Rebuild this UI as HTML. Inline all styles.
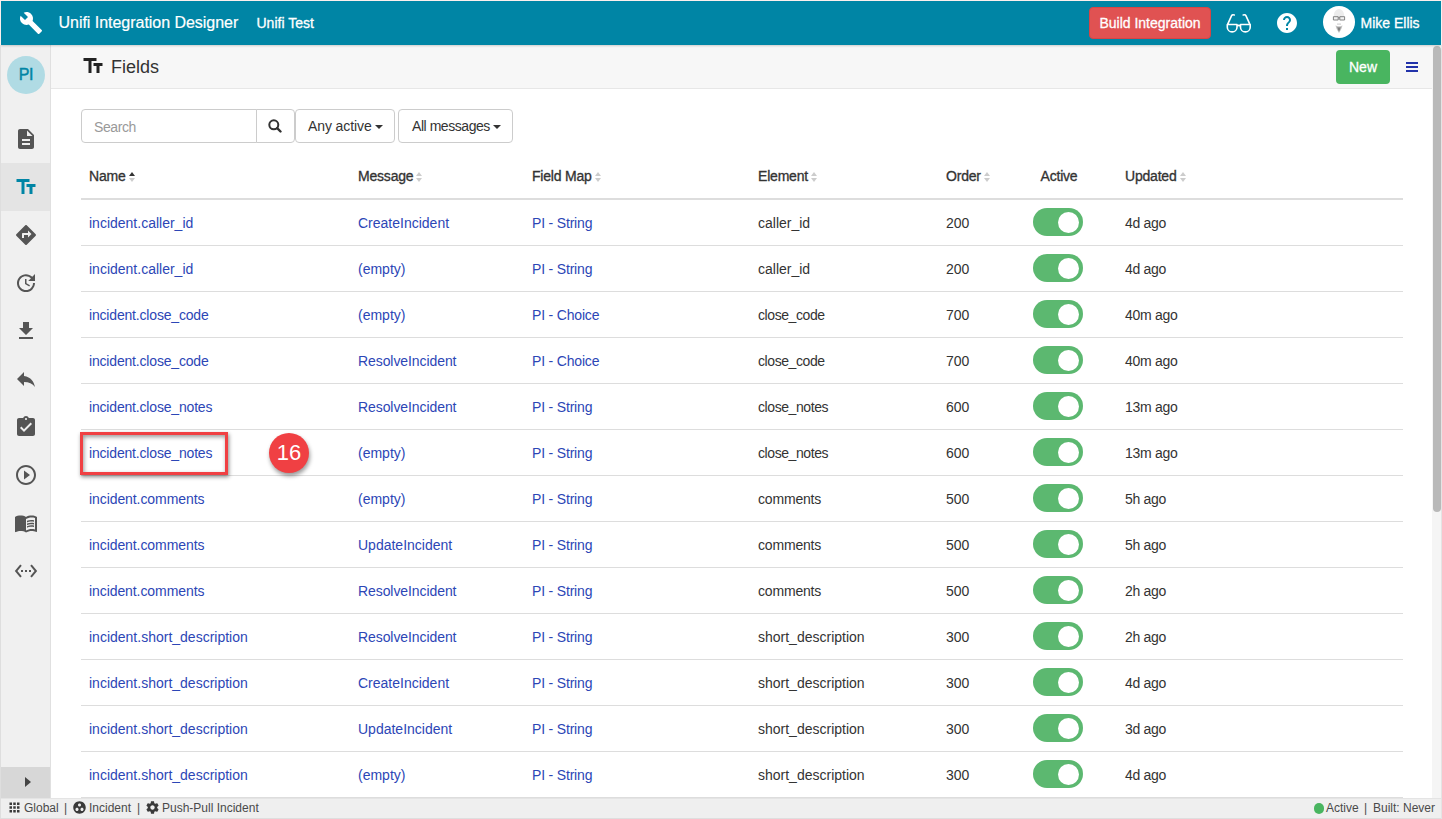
<!DOCTYPE html>
<html lang="en"><head><meta charset="utf-8"><title>Unifi Integration Designer</title>
<style>
*{box-sizing:border-box;margin:0;padding:0}
html,body{width:1442px;height:819px;overflow:hidden;background:#fcefed;font-family:"Liberation Sans",sans-serif;font-size:14px;color:#333}
#app{position:absolute;left:1px;top:1px;width:1440px;height:817px;background:#fff;overflow:hidden}
.abs{position:absolute}
.t{position:absolute;white-space:nowrap;line-height:20px}
.btn{position:absolute;text-align:center;font-size:14px;white-space:nowrap}
#top{position:absolute;left:0;top:0;width:1440px;height:44px;background:#0085a5;color:#fff;z-index:5;box-shadow:0 1px 2px rgba(0,0,0,.18)}
#side{position:absolute;left:0;top:44px;width:50px;height:753px;background:#f0f0f0;border-right:1px solid #e0e0e0}
#side .pi{position:absolute;left:6px;top:11px;width:38px;height:38px;border-radius:50%;background:#b0dbe4;color:#0085a5;font-size:16px;letter-spacing:-.3px;line-height:38px;text-align:center;-webkit-text-stroke:.45px #0085a5}
#side .sel{position:absolute;left:0;top:118px;width:49px;height:48px;background:#e4e4e4}
#side .exp{position:absolute;left:0;top:722px;width:49px;height:31px;background:#d7d7d7}
#side .exp i{position:absolute;left:24px;top:10px;border-left:6px solid #444;border-top:5px solid transparent;border-bottom:5px solid transparent}
#hdr{position:absolute;left:50px;top:44px;width:1381px;height:44px;background:#f7f7f7;border-bottom:1px solid #e7e7e7}
#main{position:absolute;left:0;top:0;width:1432px;height:797px}
.search{position:absolute;left:80px;top:108px;width:176px;height:34px;border:1px solid #ccc;border-radius:4px 0 0 4px;background:#fff}
.search span{position:absolute;left:12px;top:7px;line-height:20px;color:#999;letter-spacing:-.4px}
.sbtn{position:absolute;left:255px;top:108px;width:39px;height:34px;border:1px solid #ccc;border-radius:0 4px 4px 0;background:#fff}
.sbtn svg{position:absolute;left:11px;top:9px}
.dd{position:absolute;top:108px;height:34px;border:1px solid #ccc;border-radius:4px;background:#fff;line-height:32px;padding-left:12px;white-space:nowrap}
.dd i{display:inline-block;margin-left:3px;vertical-align:2px;border-top:4px solid #333;border-left:4px solid transparent;border-right:4px solid transparent}
table{position:absolute;left:80px;top:153px;width:1322px;border-collapse:collapse;table-layout:fixed}
th{height:45px;text-align:left;font-weight:normal;-webkit-text-stroke:.32px #333;letter-spacing:-.2px;padding:0 8px;border-bottom:2px solid #ddd;white-space:nowrap;color:#333}
td{height:46px;padding:2px 8px 0;border-bottom:1px solid #ddd;white-space:nowrap;vertical-align:middle}
th.c,td.c{text-align:center}
a{color:#2c46b6}
.k1{letter-spacing:-.08px}.k2{letter-spacing:-.18px}.k3{letter-spacing:-.3px}.k4{letter-spacing:-.42px}
.so{display:inline-block;position:relative;width:8px;height:12px;margin-left:3px;vertical-align:-2px}
.so:before,.so:after{content:"";position:absolute;left:0;border-left:3.500px solid transparent;border-right:3.500px solid transparent}
.so:before{top:1px;border-bottom:4px solid #ccc}
.so:after{top:7px;border-top:4px solid #ccc}
.so.on:before{border-bottom-color:#333}
.tg{display:inline-block;position:relative;top:-1px;left:-1px;width:50px;height:28px;border-radius:14px;background:#5cb870;vertical-align:middle}
.tg i{position:absolute;right:4px;top:3.500px;width:21px;height:21px;border-radius:50%;background:#fff}
.hl{position:absolute;left:79px;top:431px;width:148px;height:43px;border:3px solid #f04043;box-shadow:1px 2px 4px rgba(0,0,0,.45),inset 1px 2px 4px rgba(0,0,0,.4)}
.badge{position:absolute;left:268px;top:432px;width:40px;height:40px;border-radius:50%;background:#f04043;color:#fff;font-size:22px;line-height:40px;text-align:center;box-shadow:1px 3px 4px rgba(0,0,0,.4)}
#sb{position:absolute;left:1431px;top:44px;width:9px;height:753px;background:#f5f5f5}
#sb i{position:absolute;left:1px;top:1px;width:8px;height:466px;background:#b9b9b9;border-radius:4px}
#foot{position:absolute;left:0;top:797px;width:1440px;height:20px;background:#efefef;border-top:1px solid #e4e4e4;font-size:12px;color:#4a4a4a}
#foot .t{line-height:19px;font-size:12px}
#foot .dot{position:absolute;left:1312.500px;top:4px;width:10.500px;height:10.500px;border-radius:50%;background:#49b560}
.edge{position:absolute;background:#dedede}
.bold{-webkit-text-stroke:.3px currentColor}
</style></head><body>
<div class="edge" style="left:0;top:45px;width:1px;height:774px"></div><div class="edge" style="left:0;top:818px;width:1442px;height:1px"></div><div class="edge" style="left:1441px;top:45px;width:1px;height:774px;background:#e4e4e4"></div>
<div id="app">
<div id="top">
<svg class="abs" style="left:18px;top:10px" width="24" height="24" viewBox="0 0 24 24" fill="#fff"><path d="M22.7 19l-9.1-9.1c.9-2.3.4-5-1.5-6.9-2-2-5-2.4-7.4-1.3L9 6 6 9 1.6 4.7C.4 7.1.9 10.1 2.9 12.1c1.9 1.9 4.6 2.4 6.9 1.5l9.1 9.1c.4.4 1 .4 1.4 0l2.3-2.3c.5-.4.5-1.1.1-1.4z"/></svg>
<span class="t" style="left:57.500px;top:10px;font-size:16px;line-height:24px;letter-spacing:-.03px;-webkit-text-stroke:.2px #fff">Unifi Integration Designer</span>
<span class="t bold" style="left:255.500px;top:11px;font-size:14px;line-height:22px">Unifi Test</span>
<span class="btn bold" style="left:1088px;top:6px;width:122px;height:32px;line-height:31px;background:#e05252;border:1px solid #d64545;border-radius:4px;color:#fff">Build Integration</span>
<svg class="abs" style="left:1224px;top:12px" width="28" height="22" viewBox="0 0 28 22" fill="none" stroke="#fff" stroke-width="1.600" stroke-linecap="round" stroke-linejoin="round"><path d="M2.300 11.500h9.700v2.700a4.850 4.700 0 0 1-9.700 0zM15.500 11.500h9.700v2.700a4.850 4.700 0 0 1-9.700 0zM12 13c.9-.6 2.600-.6 3.500 0M2.600 11.300L6.600 2.700c.4-.9 1.500-1.200 2.700-.7M24.900 11.300L20.900 2.700c-.4-.9-1.500-1.200-2.700-.7"/></svg>
<svg class="abs" style="left:1274px;top:10px" width="24" height="24" viewBox="0 0 24 24" fill="#fff"><path d="M12 2C6.480 2 2 6.480 2 12s4.480 10 10 10 10-4.480 10-10S17.520 2 12 2zm1 17h-2v-2h2v2zm2.070-7.750l-.900.920C13.450 12.900 13 13.500 13 15h-2v-.500c0-1.100.450-2.100 1.170-2.830l1.240-1.260c.370-.360.590-.860.590-1.410 0-1.100-.900-2-2-2s-2 .900-2 2H8c0-2.210 1.790-4 4-4s4 1.790 4 4c0 .880-.360 1.680-.930 2.250z"/></svg>
<svg class="abs" style="left:1322px;top:5px" width="32" height="32" viewBox="0 0 32 32"><circle cx="16" cy="16" r="16" fill="#fff"/><path d="M10.800 12.500c-.6-6 2-9.500 5.200-9.500s5.800 3.500 5.200 9.500z" fill="#ececec"/><path d="M10.400 10.700h4.800v3.300h-4.800zM16.800 10.700h4.800v3.300h-4.800z" fill="#f2f2f2" stroke="#777" stroke-width=".9"/><path d="M15.200 11.800h1.600" stroke="#777" stroke-width=".8"/><path d="M14 18.100h4" stroke="#b0b0b0" stroke-width=".7"/><path d="M12.500 19.300c1.500 1.300 5.500 1.300 7 0-.6 3.500-2.400 6.200-3.500 7.700-1.100-1.500-2.900-4.200-3.500-7.700z" fill="#c4c4c4"/><path d="M14.300 21c.9.500 2.500.500 3.400 0-.3 2-1.100 3.500-1.700 4.600-.6-1.100-1.400-2.600-1.700-4.600z" fill="#808080"/></svg>
<span class="t bold" style="left:1359.500px;top:11px;font-size:14px;line-height:22px">Mike Ellis</span>
</div>
<div id="side">
<span class="pi">PI</span>
<div class="sel"></div>
<svg class="abs" style="left:13px;top:82px" width="24" height="24" viewBox="0 0 24 24" fill="#555"><path d="M14 2H6c-1.1 0-1.99.9-1.99 2L4 20c0 1.1.89 2 1.99 2H18c1.1 0 2-.9 2-2V8l-6-6zm2 16H8v-2h8v2zm0-4H8v-2h8v2zm-3-5V3.5L18.5 9H13z"/></svg>
<svg class="abs" style="left:13px;top:130px" width="24" height="24" viewBox="0 0 24 24" fill="#0085a5"><path d="M2.5 4v3h5v12h3V7h5V4h-13zm19 5h-9v3h3v7h3v-7h3V9z"/></svg>
<svg class="abs" style="left:13px;top:178px" width="24" height="24" viewBox="0 0 24 24" fill="#555"><path d="M21.71 11.29l-9-9c-.39-.39-1.02-.39-1.41 0l-9 9c-.39.39-.39 1.02 0 1.41l9 9c.39.39 1.02.39 1.41 0l9-9c.39-.38.39-1.01 0-1.41zM14 14.5V12h-4v3H8v-4c0-.55.45-1 1-1h5V7.500l3.500 3.500-3.500 3.500z"/></svg>
<svg class="abs" style="left:13px;top:226px" width="24" height="24" viewBox="0 0 24 24" fill="#555"><path d="M21 10.120h-6.780l2.740-2.820c-2.730-2.700-7.150-2.800-9.880-.100-2.730 2.710-2.730 7.080 0 9.790 2.730 2.710 7.150 2.710 9.880 0C18.320 15.650 19 14.080 19 12.100h2c0 1.980-.880 4.550-2.640 6.290-3.510 3.480-9.210 3.480-12.720 0-3.500-3.470-3.530-9.110-.020-12.580 3.510-3.470 9.140-3.470 12.650 0L21 3v7.120zM12.500 8v4.250l3.500 2.080-.720 1.210L11 13V8h1.500z"/></svg>
<svg class="abs" style="left:13px;top:274px" width="24" height="24" viewBox="0 0 24 24" fill="#555"><path d="M19 9h-4V3H9v6H5l7 7 7-7zM5 18v2h14v-2H5z"/></svg>
<svg class="abs" style="left:13px;top:322px" width="24" height="24" viewBox="0 0 24 24" fill="#555"><path d="M10 9V5l-7 7 7 7v-4.100c5 0 8.500 1.600 11 5.100-1-5-4-10-11-11z"/></svg>
<svg class="abs" style="left:13px;top:370px" width="24" height="24" viewBox="0 0 24 24" fill="#555"><path d="M19 3h-4.180C14.400 1.840 13.300 1 12 1c-1.300 0-2.400.840-2.820 2H5c-1.100 0-2 .900-2 2v14c0 1.100.900 2 2 2h14c1.100 0 2-.900 2-2V5c0-1.100-.900-2-2-2zm-7 0c.550 0 1 .450 1 1s-.450 1-1 1-1-.450-1-1 .450-1 1-1zm-2 14l-4-4 1.410-1.410L10 14.170l6.590-6.590L18 9l-8 8z"/></svg>
<svg class="abs" style="left:13px;top:418px" width="24" height="24" viewBox="0 0 24 24" fill="#555"><path d="M10 16.500l6-4.500-6-4.500v9zM12 2C6.480 2 2 6.480 2 12s4.480 10 10 10 10-4.480 10-10S17.520 2 12 2zm0 18c-4.410 0-8-3.590-8-8s3.590-8 8-8 8 3.590 8 8-3.590 8-8 8z"/></svg>
<svg class="abs" style="left:13px;top:466px" width="24" height="24" viewBox="0 0 24 24" fill="#555"><path d="M21 5c-1.110-.350-2.330-.500-3.500-.500-1.950 0-4.050.400-5.500 1.500-1.450-1.100-3.550-1.500-5.500-1.500S2.450 4.900 1 6v14.650c0 .250.250.500.500.500.100 0 .150-.050.250-.050C3.100 20.450 5.050 20 6.500 20c1.950 0 4.050.400 5.500 1.500 1.350-.850 3.800-1.500 5.500-1.500 1.650 0 3.350.300 4.750 1.050.100.050.150.050.250.050.250 0 .500-.250.500-.500V6c-.600-.450-1.250-.750-2-1zm0 13.500c-1.100-.350-2.300-.500-3.500-.500-1.700 0-4.150.650-5.500 1.500V8c1.350-.850 3.800-1.500 5.500-1.500 1.200 0 2.400.150 3.500.500v11.500zM17.500 10.500c.880 0 1.730.090 2.500.260V9.240c-.790-.150-1.640-.240-2.500-.240-1.700 0-3.240.290-4.500.830v1.660c1.130-.640 2.700-.990 4.500-.990zM13 12.490v1.660c1.130-.640 2.700-.990 4.500-.990.880 0 1.730.090 2.500.260V11.900c-.790-.150-1.640-.240-2.500-.240-1.700 0-3.240.300-4.500.830zM17.500 14.330c-1.700 0-3.240.290-4.500.830v1.660c1.130-.640 2.700-.990 4.500-.990.880 0 1.730.090 2.500.260v-1.520c-.790-.160-1.640-.240-2.500-.240z"/></svg>
<svg class="abs" style="left:13px;top:514px" width="24" height="24" viewBox="0 0 24 24" fill="#555"><path d="M7.770 6.760L6.230 5.480.820 12l5.410 6.520 1.540-1.280L3.420 12l4.350-5.240zM7 13h2v-2H7v2zm10-2h-2v2h2v-2zm-6 2h2v-2h-2v2zm6.770-7.520l-1.540 1.280L20.580 12l-4.350 5.240 1.540 1.280L23.180 12l-5.410-6.520z"/></svg>
<div class="exp"><i></i></div>
</div>
<div id="hdr">
<svg class="abs" style="left:30px;top:9px" width="24" height="24" viewBox="0 0 24 24" fill="#222"><path d="M2.5 4v3h5v12h3V7h5V4h-13zm19 5h-9v3h3v7h3v-7h3V9z"/></svg>
<span class="t" style="left:60px;top:9px;font-size:18px;line-height:26px;color:#333">Fields</span>
<span class="btn bold" style="left:1285px;top:5px;width:54px;height:34px;line-height:34px;background:#49b560;border-radius:4px;color:#fff">New</span>
<svg class="abs" style="left:1355px;top:17px" width="12" height="10" viewBox="0 0 12 10" fill="#2233aa"><path d="M0 0h12v2H0zM0 4h12v2H0zM0 8h12v2H0z"/></svg>
</div>
<div id="main">
<div class="search"><span>Search</span></div>
<div class="sbtn"><svg width="14" height="14" viewBox="0 0 14 14" fill="none" stroke="#333" stroke-width="2"><circle cx="5.800" cy="5.800" r="4.500"/><path d="M9.200 9.200l3.300 3.300" stroke-width="2.400" stroke-linecap="round"/></svg></div>
<div class="dd" style="left:294px;width:100px;letter-spacing:-.1px">Any active<i></i></div>
<div class="dd" style="left:397px;width:115px;letter-spacing:-.45px;padding-left:13px">All messages<i></i></div>
<table>
<colgroup><col style="width:269px"><col style="width:174px"><col style="width:226px"><col style="width:188px"><col style="width:63px"><col style="width:116px"><col style="width:120px"><col></colgroup>
<thead><tr><th>Name<b class="so on"></b></th><th>Message<b class="so"></b></th><th>Field Map<b class="so"></b></th><th>Element<b class="so"></b></th><th>Order<b class="so"></b></th><th class="c">Active</th><th>Updated<b class="so"></b></th><th></th></tr></thead>
<tbody>
<tr><td><a>incident.caller_id</a></td><td><a>CreateIncident</a></td><td><a class="k2">PI - String</a></td><td>caller_id</td><td>200</td><td class="c"><span class="tg"><i></i></span></td><td class="k3">4d ago</td><td></td></tr>
<tr><td><a>incident.caller_id</a></td><td><a>(empty)</a></td><td><a class="k2">PI - String</a></td><td>caller_id</td><td>200</td><td class="c"><span class="tg"><i></i></span></td><td class="k3">4d ago</td><td></td></tr>
<tr><td><a class="k2">incident.close_code</a></td><td><a>(empty)</a></td><td><a class="k2">PI - Choice</a></td><td><span class="k4">close_code</span></td><td>700</td><td class="c"><span class="tg"><i></i></span></td><td class="k3">40m ago</td><td></td></tr>
<tr><td><a class="k2">incident.close_code</a></td><td><a class="k1">ResolveIncident</a></td><td><a class="k2">PI - Choice</a></td><td><span class="k4">close_code</span></td><td>700</td><td class="c"><span class="tg"><i></i></span></td><td class="k3">40m ago</td><td></td></tr>
<tr><td><a class="k2">incident.close_notes</a></td><td><a class="k1">ResolveIncident</a></td><td><a class="k2">PI - String</a></td><td><span class="k4">close_notes</span></td><td>600</td><td class="c"><span class="tg"><i></i></span></td><td class="k3">13m ago</td><td></td></tr>
<tr><td><a class="k2">incident.close_notes</a></td><td><a>(empty)</a></td><td><a class="k2">PI - String</a></td><td><span class="k4">close_notes</span></td><td>600</td><td class="c"><span class="tg"><i></i></span></td><td class="k3">13m ago</td><td></td></tr>
<tr><td><a class="k1">incident.comments</a></td><td><a>(empty)</a></td><td><a class="k2">PI - String</a></td><td><span class="k2">comments</span></td><td>500</td><td class="c"><span class="tg"><i></i></span></td><td class="k3">5h ago</td><td></td></tr>
<tr><td><a class="k1">incident.comments</a></td><td><a>UpdateIncident</a></td><td><a class="k2">PI - String</a></td><td><span class="k2">comments</span></td><td>500</td><td class="c"><span class="tg"><i></i></span></td><td class="k3">5h ago</td><td></td></tr>
<tr><td><a class="k1">incident.comments</a></td><td><a class="k1">ResolveIncident</a></td><td><a class="k2">PI - String</a></td><td><span class="k2">comments</span></td><td>500</td><td class="c"><span class="tg"><i></i></span></td><td class="k3">2h ago</td><td></td></tr>
<tr><td><a>incident.short_description</a></td><td><a class="k1">ResolveIncident</a></td><td><a class="k2">PI - String</a></td><td>short_description</td><td>300</td><td class="c"><span class="tg"><i></i></span></td><td class="k3">2h ago</td><td></td></tr>
<tr><td><a>incident.short_description</a></td><td><a>CreateIncident</a></td><td><a class="k2">PI - String</a></td><td>short_description</td><td>300</td><td class="c"><span class="tg"><i></i></span></td><td class="k3">4d ago</td><td></td></tr>
<tr><td><a>incident.short_description</a></td><td><a>UpdateIncident</a></td><td><a class="k2">PI - String</a></td><td>short_description</td><td>300</td><td class="c"><span class="tg"><i></i></span></td><td class="k3">3d ago</td><td></td></tr>
<tr><td><a>incident.short_description</a></td><td><a>(empty)</a></td><td><a class="k2">PI - String</a></td><td>short_description</td><td>300</td><td class="c"><span class="tg"><i></i></span></td><td class="k3">4d ago</td><td></td></tr>
</tbody></table>
<div class="hl"></div>
<div class="badge">16</div>
</div>
<div id="sb"><i></i></div>
<div id="foot">
<svg class="abs" style="left:5.5px;top:1px" width="15" height="15" viewBox="0 0 24 24" fill="#3a3a3a"><path d="M4 8h4V4H4v4zm6 12h4v-4h-4v4zm-6 0h4v-4H4v4zm0-6h4v-4H4v4zm6 0h4v-4h-4v4zm6-10v4h4V4h-4zm-6 4h4V4h-4v4zm6 6h4v-4h-4v4zm0 6h4v-4h-4v4z"/></svg>
<span class="t" style="left:23px;top:0">Global</span><span class="t" style="left:63px;top:0">|</span>
<svg class="abs" style="left:70.5px;top:1px" width="15" height="15" viewBox="0 0 24 24" fill="#3a3a3a"><path d="M12 2C6.480 2 2 6.480 2 12s4.480 10 10 10 10-4.480 10-10S17.520 2 12 2zM8 17.500c-1.380 0-2.500-1.120-2.500-2.500s1.120-2.500 2.500-2.500 2.500 1.120 2.500 2.500-1.120 2.500-2.500 2.500zM9.500 8c0-1.380 1.120-2.500 2.500-2.500s2.500 1.120 2.500 2.500-1.120 2.500-2.500 2.500S9.500 9.380 9.500 8zm6.500 9.500c-1.380 0-2.500-1.120-2.500-2.500s1.120-2.500 2.500-2.500 2.500 1.120 2.500 2.500-1.120 2.500-2.500 2.500z"/></svg>
<span class="t" style="left:88px;top:0">Incident</span><span class="t" style="left:136px;top:0">|</span>
<svg class="abs" style="left:143.5px;top:1px" width="15" height="15" viewBox="0 0 24 24" fill="#3a3a3a"><path d="M19.430 12.980c.040-.320.070-.640.070-.980s-.030-.660-.070-.980l2.110-1.650c.190-.150.240-.420.120-.640l-2-3.460c-.120-.220-.390-.300-.610-.220l-2.490 1c-.520-.400-1.080-.730-1.690-.980l-.380-2.650C14.460 2.180 14.250 2 14 2h-4c-.250 0-.460.180-.490.420l-.380 2.650c-.610.250-1.170.590-1.690.980l-2.490-1c-.230-.090-.490 0-.610.220l-2 3.460c-.130.220-.070.490.120.640l2.110 1.650c-.040.320-.070.650-.070.980s.030.660.070.980l-2.110 1.650c-.190.150-.240.420-.120.640l2 3.460c.120.220.390.300.610.220l2.490-1c.520.400 1.080.730 1.690.980l.380 2.650c.030.240.240.420.490.420h4c.250 0 .460-.180.490-.420l.380-2.650c.610-.250 1.170-.590 1.690-.980l2.490 1c.230.090.490 0 .610-.220l2-3.460c.120-.220.070-.490-.120-.640l-2.110-1.650zM12 15.500c-1.930 0-3.500-1.570-3.500-3.500s1.570-3.500 3.500-3.500 3.500 1.570 3.500 3.500-1.570 3.500-3.500 3.500z"/></svg>
<span class="t" style="left:161px;top:0">Push-Pull Incident</span>
<i class="dot"></i><span class="t" style="left:1325px;top:0">Active</span><span class="t" style="left:1363px;top:0">|</span><span class="t" style="left:1372px;top:0">Built: Never</span>
</div>
</div>
</body></html>
